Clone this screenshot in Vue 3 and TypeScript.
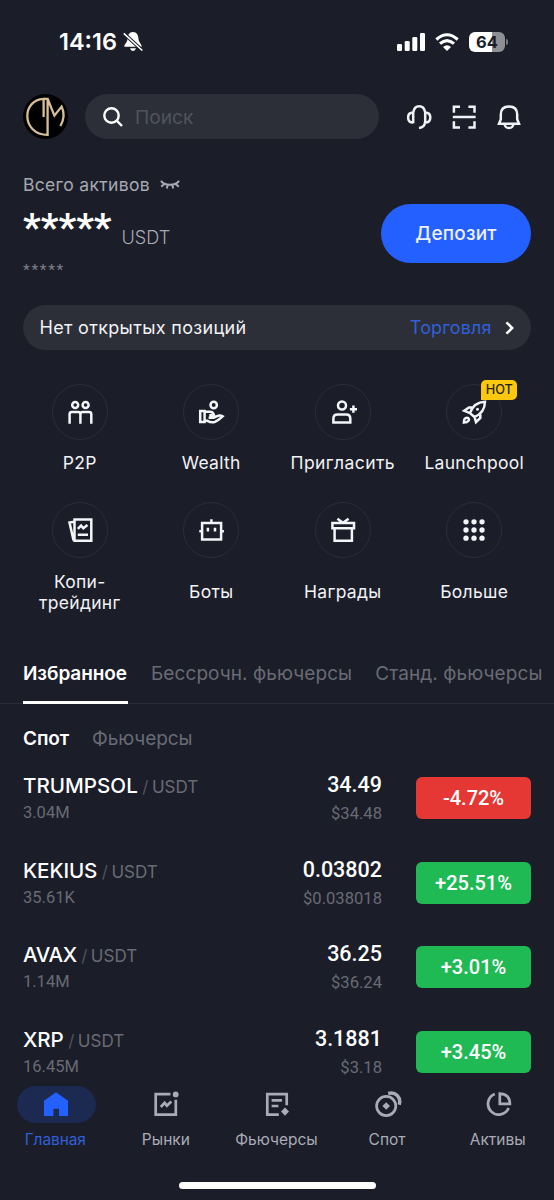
<script setup lang="ts">
interface Shortcut { label: string; icon: string; cls: string; badge?: string }
interface Market { base: string; volume: string; price: string; usd: string; change: string; up: boolean; cls: string }
interface NavItem { label: string; icon: string; cls: string; active?: boolean }

const shortcuts: Shortcut[] = [
  {
    label: 'P2P', cls: 'p2p',
    icon: '<circle cx="9.2" cy="7" r="3"/><circle cx="19.6" cy="7" r="3"/><path d="M3.6 25.7V16.2Q3.6 14 5.8 14H12.2Q14.4 14 14.4 16.2V25.7M14.4 16.2Q14.4 14 16.6 14H23.1Q25.3 14 25.3 16.2V25.7"/>',
  },
  {
    label: 'Wealth', cls: 'wealth',
    icon: '<circle cx="16.7" cy="7" r="3.2"/><path d="M3.2 12.9H7.6V24H3.2ZM7.6 13.8H13Q16 13.8 17 17.2H12.2M7.6 22.8H10.4Q13.8 24.8 17.6 24C20.8 23.2 23 20.6 25.6 18.3Q23 16.9 19.6 18.3L16.6 19.8H11.6"/>',
  },
  {
    label: 'Пригласить', cls: 'invite',
    icon: '<circle cx="13" cy="7.5" r="4"/><path d="M4.4 24.5V20.6Q4.4 16.5 8.5 16.5H17.2Q21.3 16.5 21.3 20.6V24.5ZM20.9 11.2H28M24.4 7.6V14.8"/>',
  },
  {
    label: 'Launchpool', cls: 'launch', badge: 'HOT',
    icon: '<path d="M25 3.8C17.8 4 12.4 8.2 10 15.2L14.5 19C20.8 16.5 24.8 11 25 3.8ZM12.6 9.4H9L4.2 12.8L10 15.2M20.3 16.3V20L16 24.2L14.5 19M3.9 24.6C3.8 21.2 4.9 19.7 7 19.7C9 19.7 9.5 21.6 8.4 22.9C7.5 24 6 24.5 3.9 24.6Z"/><circle cx="17.5" cy="11.3" r="1.5" fill="currentColor" stroke="none"/>',
  },
  {
    label: 'Копи-\nтрейдинг', cls: 'copy',
    icon: '<path d="M8.5 3.6H25.3V24.8H8.5ZM8.5 5.8L3.5 6.6L7.6 24.4M11.8 12.9L15.1 9.6L17.3 12.2L21.5 8.9M11.8 18.7H22" />',
  },
  {
    label: 'Боты', cls: 'bots',
    icon: '<path d="M5.1 6.9H24.1V23.5H5.1ZM14.4 3.3V7M2.3 15.2H5M24.2 15.2H26.9M10.9 11.7V15.5M18 11.7V15.5"/>',
  },
  {
    label: 'Награды', cls: 'rewards',
    icon: '<path d="M3.4 6.9H25V12.3H3.4ZM5.6 12.3H22.9V24.8H5.6ZM8.4 2.8L13.9 6.7L19.6 2.8"/>',
  },
  {
    label: 'Больше', cls: 'more',
    icon: '<g fill="currentColor" stroke="none"><circle cx="6" cy="5.8" r="2.65"/><circle cx="14" cy="5.8" r="2.65"/><circle cx="22" cy="5.8" r="2.65"/><circle cx="6" cy="14" r="2.65"/><circle cx="14" cy="14" r="2.65"/><circle cx="22" cy="14" r="2.65"/><circle cx="6" cy="22.2" r="2.65"/><circle cx="14" cy="22.2" r="2.65"/><circle cx="22" cy="22.2" r="2.65"/></g>',
  },
]

const markets: Market[] = [
  { base: 'TRUMPSOL', volume: '3.04M', price: '34.49', usd: '$34.48', change: '-4.72%', up: false, cls: 'trump' },
  { base: 'KEKIUS', volume: '35.61K', price: '0.03802', usd: '$0.038018', change: '+25.51%', up: true, cls: 'kekius' },
  { base: 'AVAX', volume: '1.14M', price: '36.25', usd: '$36.24', change: '+3.01%', up: true, cls: 'avax' },
  { base: 'XRP', volume: '16.45M', price: '3.1881', usd: '$3.18', change: '+3.45%', up: true, cls: 'xrp' },
]

const nav: NavItem[] = [
  {
    label: 'Главная', cls: 'home', active: true,
    icon: '<path d="M14 2.3L26 10.8V26H17V18.8H11.4V26H2V10.8Z" fill="currentColor" stroke="none"/>',
  },
  {
    label: 'Рынки', cls: 'markets',
    icon: '<path d="M18.4 4.2H3.7V24.6H23.8V9.8M8.8 17L12.6 12.8L14.9 15.7L19.3 11.5"/><circle cx="23.7" cy="4.4" r="2.9" fill="currentColor" stroke="none"/>',
  },
  {
    label: 'Фьючерсы', cls: 'futures',
    icon: '<path d="M23.7 15.2V4.2H4.3V24.6H15.8M8.6 10.4H19M8.6 16H15.4"/><path d="M22 17.4L26 21.6L22 25.8L18 21.6Z" fill="currentColor" stroke="none"/>',
  },
  {
    label: 'Спот', cls: 'spot',
    icon: '<circle cx="12.2" cy="16" r="9.6"/><path d="M12.2 12.2L16 16L12.2 19.8L8.4 16Z" fill="currentColor" stroke="none"/><path d="M14.2 3.5C21.5 1.4 27.4 7.3 25.2 14.8" stroke-width="3.4"/>',
  },
  {
    label: 'Активы', cls: 'assets',
    icon: '<path d="M10.8 3.9A10.7 10.7 0 1 0 24.6 18M15.8 3.6V13.8H25.9Q25.7 3.9 15.8 3.6Z"/>',
  },
]
</script>

<template>
  <main class="screen">
    <div class="status">
      <div class="clock">
        <span class="time">14:16</span>
        <svg class="muted" viewBox="0 0 20 20">
          <path d="M10 .6C13.8.6 15.3 3.5 15.5 7.6C15.7 11.2 18.7 12.5 18.7 15.2H1.3C1.3 12.5 4.3 11.2 4.5 7.6C4.7 3.5 6.2.6 10 .6ZM7 16.8H13Q12.4 19.4 10 19.4Q7.6 19.4 7 16.8Z" fill="#fff" />
          <path d="M.8 1.8L19.3 19" stroke="#1b1d28" stroke-width="3.6" />
          <path d="M.8 1.8L19.3 19" stroke="#fff" stroke-width="1.6" />
        </svg>
      </div>
      <div class="signals">
        <svg class="cell" viewBox="0 0 28 18">
          <g fill="#fff"><rect y="11" width="5" height="7" rx="1.3" /><rect x="7.7" y="8" width="5" height="10" rx="1.3" /><rect x="15.3" y="4" width="5" height="14" rx="1.3" /><rect x="23" width="5" height="18" rx="1.3" /></g>
        </svg>
        <svg class="wifi" viewBox="0 0 24 18">
          <g fill="none" stroke="#fff" stroke-width="3.1"><path d="M1.3 6.5Q12-3 22.7 6.5" /><path d="M5 10.7Q12 4.4 19 10.7" /></g>
          <path d="M8 14Q12 10.3 16 14L12 18Z" fill="#fff" />
        </svg>
        <span class="battery">64</span>
        <i class="cap"></i>
      </div>
    </div>

    <header class="top">
      <svg class="avatar" viewBox="0 0 45 45">
        <circle cx="22.5" cy="22.5" r="22.5" fill="#000" />
        <path d="M20.6 23V4.8C-1.6 5.6-1.9 40.6 24.6 40.8V4.8L31.4 21.6L38.6 12.6Q43.2 22 37.4 32M19.6 4.8H25.4" fill="none" stroke="#d6be97" stroke-width="2.3" />
      </svg>
      <div class="search">
        <svg viewBox="0 0 20 20"><circle cx="8.5" cy="8.5" r="7.2" /><path d="M13.7 13.7L19 19" /></svg>
        <span class="placeholder">Поиск</span>
      </div>
      <div class="actions">
        <svg viewBox="0 0 26 26"><path d="M7.2 19.3V8.6Q8.2 2.2 13.2 2.2T19.2 8.6V17.6Q18.6 23.6 13 24M7.2 8.4C4 8.4 2.1 10.4 2.1 13.5S4 18.6 7.2 18.6M19.2 8.4C22.4 8.4 24.3 10.4 24.3 13.5S22.4 18.6 19.2 18.6" /></svg>
        <svg viewBox="0 0 26 26"><path d="M2.9 8.8V2.7H9M17.4 2.7H23.5V8.8M2.9 17.2V23.5H9M17.4 23.5H23.5V17.2M1.8 13.1H24.6" /></svg>
        <svg viewBox="0 0 26 26"><path d="M4.8 15.2V10.6Q4.8 2.6 13 2.6T21.2 10.6V15.2L23 19.8H3ZM8.6 20Q9 24 13 24T17.4 20" /></svg>
      </div>
    </header>

    <section class="balance">
      <div class="funds">
        <div class="caption">
          <span>Всего активов</span>
          <svg viewBox="0 0 20 11"><path d="M1 1.8Q3.2 5.7 10 5.7T19 1.8M4.2 5.2L1.2 7.6M15.8 5.2L18.8 7.6M7.7 6L6.8 9.4M12.3 6L13.2 9.4" /></svg>
        </div>
        <div class="amount"><strong>*****</strong><span>USDT</span></div>
        <div class="fiat">*****</div>
      </div>
      <button class="deposit"><span>Депозит</span></button>
    </section>

    <section class="positions">
      <span class="none">Нет открытых позиций</span>
      <span class="trade">Торговля</span>
      <svg viewBox="0 0 9 14"><path d="M1.4 1.3L7.2 7L1.4 12.7" /></svg>
    </section>

    <section class="shortcuts">
      <div v-for="s in shortcuts" :key="s.label" class="shortcut">
        <div class="disc">
          <svg viewBox="0 0 28 28" v-html="s.icon"></svg>
          <b v-if="s.badge" class="badge">{{ s.badge }}</b>
        </div>
        <div class="name"><span :class="s.cls">{{ s.label }}</span></div>
      </div>
    </section>

    <nav class="tabs">
      <span class="tab on">Избранное</span>
      <span class="tab perp">Бессрочн. фьючерсы</span>
      <span class="tab std">Станд. фьючерсы</span>
    </nav>
    <nav class="subtabs">
      <span class="sub on">Спот</span>
      <span class="sub">Фьючерсы</span>
    </nav>

    <section class="list">
      <article v-for="m in markets" :key="m.base" class="row">
        <div class="pair">
          <div class="symbol"><span :class="['base', m.cls]">{{ m.base }}</span><i>/</i><span class="quote">USDT</span></div>
          <div class="volume">{{ m.volume }}</div>
        </div>
        <div class="quotes">
          <div class="price">{{ m.price }}</div>
          <div class="usd">{{ m.usd }}</div>
        </div>
        <div class="change" :class="{ up: m.up }">{{ m.change }}</div>
      </article>
    </section>

    <footer class="dock">
      <div v-for="n in nav" :key="n.label" class="item" :class="{ active: n.active }">
        <div class="glyph"><svg viewBox="0 0 28 28" v-html="n.icon"></svg></div>
        <span :class="['text', n.cls]">{{ n.label }}</span>
      </div>
      <i class="handle"></i>
    </footer>
  </main>
</template>

<style>
body { margin: 0; background: #1b1d28; }
</style>

<style scoped>
.screen {
  box-sizing: border-box;
  display: flex;
  flex-direction: column;
  width: 554px;
  height: 1200px;
  overflow: hidden;
  background: #1b1d28;
  color: #f1f2f6;
  font-family: Inter, "Noto Sans", sans-serif;
  white-space: nowrap;
}
svg { display: block; fill: none; flex: none; }
.status { display: flex; justify-content: space-between; height: 94px; padding: 0 46px 0 59px; box-sizing: border-box; }
.clock { display: flex; align-items: center; height: 83px; }
.time { width: 62px; font-size: 23.5px; font-weight: 600; color: #fff; }
.muted { width: 20px; height: 21px; margin-left: 2px; }
.signals { display: flex; align-items: center; height: 83px; }
.cell { width: 28px; height: 18px; }
.wifi { width: 24px; height: 18px; margin-left: 10px; }
.battery {
  width: 36px; height: 20px; margin-left: 10px; border-radius: 6px;
  background: linear-gradient(90deg, #fff 64%, #8e8f95 64%);
  color: #1b1d28; font-size: 16.5px; font-weight: 700; line-height: 20px; text-align: center;
}
.cap { width: 2px; height: 6px; margin-left: 1px; border-radius: 0 2px 2px 0; background: #777982; }

.top { display: flex; align-items: center; height: 45px; padding: 0 20px 0 23px; }
.avatar { width: 45px; height: 45px; }
.search { display: flex; align-items: center; width: 294px; height: 45px; margin-left: 17px; border-radius: 23px; background: #2c2f37; }
.search svg { width: 20px; height: 20px; margin-left: 18px; stroke: #fff; stroke-width: 2.4; }
.placeholder { margin-left: 12px; font-size: 19.2px; line-height: 46px; color: #50535d; }
.actions { display: flex; gap: 19px; margin-left: 26.7px; }
.actions svg { width: 26px; height: 26px; stroke: #f1f2f6; stroke-width: 2.5; }

.balance { display: flex; justify-content: space-between; height: 166px; padding: 0 23px; box-sizing: border-box; }
.caption { display: flex; align-items: center; height: 26px; margin-top: 32.5px; font-size: 17.5px; letter-spacing: 0.32px; color: #a6a9b3; }
.caption svg { width: 20px; height: 11px; margin-left: 10px; stroke: #a6a9b3; stroke-width: 2; }
.amount { display: flex; height: 60px; color: #a6a9b3; }
.amount strong { width: 98.5px; font: 700 39px/60px Roboto, sans-serif; color: #fff; }
.amount span { font-size: 18.1px; line-height: 79px; font-weight: 300; }
.fiat { height: 20px; font: 15.5px/25px Roboto, sans-serif; letter-spacing: 1.7px; color: #7d808a; }
.deposit { width: 150px; height: 59px; margin-top: 65.3px; padding: 0; border: 0; border-radius: 30px; background: #2460ff; color: #eef2ff; font: 500 19px/59px Inter, sans-serif; letter-spacing: 0.2px; }

.positions { display: flex; align-items: center; height: 45px; margin: 0 23px; padding: 0 17.5px 0 16.5px; border-radius: 23px; background: #2c2f37; font-size: 18px; }
.none { letter-spacing: 0.32px; }
.trade { margin-left: auto; color: #315fd8; letter-spacing: 0.1px; }
.positions svg { width: 9px; height: 14px; margin-left: 13px; stroke: #fff; stroke-width: 2.5; }

.shortcuts { display: grid; grid-template-columns: repeat(4, 131.5px); grid-auto-rows: 118px; margin: 34px 14px 0; height: 256px; }
.shortcut { display: flex; flex-direction: column; align-items: center; }
.disc { position: relative; display: flex; align-items: center; justify-content: center; box-sizing: border-box; width: 56px; height: 56px; border: 1px solid #2b2d38; border-radius: 50%; }
.disc svg { width: 28px; height: 28px; color: #f4f5f9; stroke: currentColor; stroke-width: 2.5; }
.badge { position: absolute; top: -5px; left: 34px; width: 36px; height: 20px; border-radius: 5px 5px 5px 0; background: #fcc70f; color: #24221d; font-size: 12.7px; line-height: 20px; font-weight: 500; text-align: center; }
.name { display: flex; align-items: center; height: 22px; margin-top: 12px; font-size: 17.5px; line-height: 21.5px; letter-spacing: 0.3px; text-align: center; white-space: pre; }
.name .invite { letter-spacing: 0.45px; }
.shortcut:nth-child(n + 5) .name { height: 44px; margin-top: 12px; }

.tabs { display: flex; gap: 23px; height: 64px; padding-left: 23px; box-sizing: border-box; border-bottom: 1px solid #2b2d38; }
.tab { height: 64px; font-size: 19px; line-height: 68px; color: #686b75; letter-spacing: 0.08px; box-sizing: border-box; }
.tab.on { width: 105px; color: #fff; font-weight: 600; letter-spacing: -0.08px; border-bottom: 3px solid #fff; }
.tab.std { letter-spacing: 0.1px; }
.subtabs { display: flex; gap: 23px; height: 73px; padding-left: 23px; }
.sub { font-size: 19px; line-height: 70px; color: #686b75; letter-spacing: -0.08px; }
.sub.on { width: 46px; color: #fff; font-weight: 600; letter-spacing: -0.1px; }

.list { flex: none; height: 301px; }
.row { display: flex; height: 84.5px; padding: 0 23px; }
.pair { flex: 1; }
.symbol { display: flex; align-items: baseline; height: 20px; line-height: 17px; }
.base { font-size: 20.6px; font-weight: 500; color: #fff; }
.kekius, .xrp { letter-spacing: -0.1px; }
.avax { letter-spacing: -0.4px; }
.symbol i { margin: 0 3.5px 0 4.5px; font-size: 17px; font-style: normal; color: #50535d; }
.quote { font-size: 17px; color: #686b75; }
.volume { margin-top: 6px; font: 16.5px/20px Roboto, sans-serif; color: #686b75; }
.quotes { width: 120px; text-align: right; font-family: Roboto, sans-serif; }
.price { font-size: 21.5px; line-height: 16px; font-weight: 500; color: #fff; }
.usd { margin-top: 11px; font-size: 16.6px; line-height: 20px; color: #686b75; }
.change { width: 115px; height: 42px; margin-left: 34px; border-radius: 6px; background: #e53835; color: #fff; font: 500 20px/42px Roboto, sans-serif; text-align: center; }
.change.up { background: #20ba55; }

.dock { display: grid; grid-template-columns: repeat(5, 110.6px); grid-template-rows: 96px 7px; flex: none; padding-top: 8px; background: #1b1d28; }
.item { display: flex; flex-direction: column; align-items: center; color: #a9acb6; }
.glyph { display: flex; align-items: center; justify-content: center; width: 79px; height: 37px; margin-left: 2px; border-radius: 19px; }
.glyph svg { width: 28px; height: 28px; margin: -2px 1px 0 0; stroke: currentColor; stroke-width: 2.7; }
.text { margin-top: 7px; font-size: 15.5px; line-height: 20px; }
.item.active { color: #2460ff; }
.active .glyph { background: #1c2a52; }
.active .text { color: #315fd8; letter-spacing: -0.1px; }
.handle { grid-column: 1 / -1; justify-self: center; width: 197px; height: 7px; margin-left: 2px; border-radius: 4px; background: #fff; }
</style>
